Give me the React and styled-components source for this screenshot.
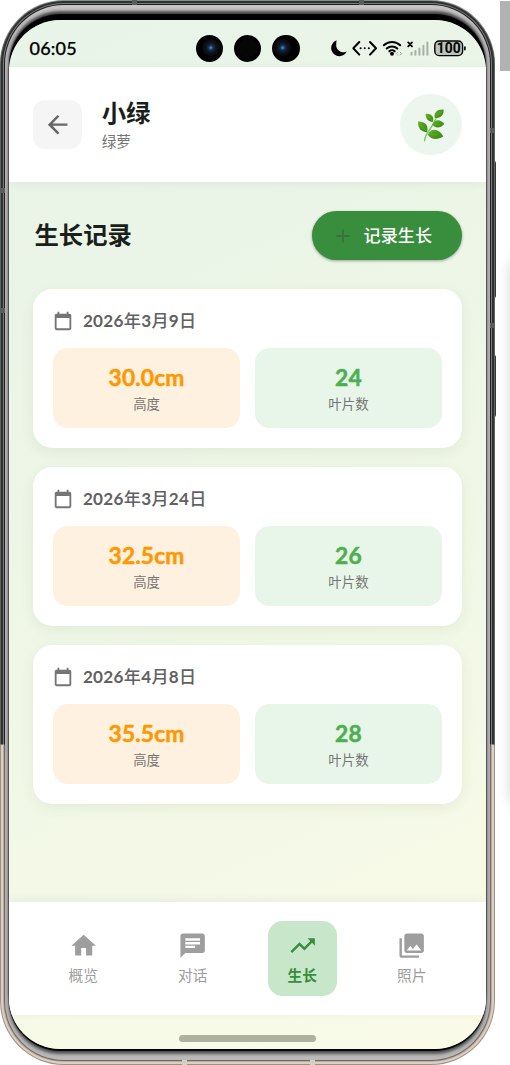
import React from 'react';
import styled, { createGlobalStyle } from 'styled-components';
import {
  MdArrowBack,
  MdHome,
  MdChat,
  MdTrendingUp,
  MdPhotoLibrary,
  MdAdd,
} from 'react-icons/md';

const GlobalStyle = createGlobalStyle`
  * { box-sizing: border-box; }
  body { margin: 0; background: #fff; overflow: hidden; }
  button { font: inherit; border: 0; padding: 0; }
  svg { display: block; flex: none; }
`;

const Stage = styled.div`
  position: relative;
  width: 510px;
  height: 1065px;
  overflow: hidden;
  font-family: Lato, 'Noto Sans CJK SC', sans-serif;
  color: #1b1f1b;
`;

const ScrollThumb = styled.div`
  position: absolute;
  left: 500px;
  top: 1px;
  width: 10px;
  height: 70px;
  background: #b2b2b2;
`;

const SidePanel = styled.div`
  position: absolute;
  left: 511px;
  top: 262px;
  width: 40px;
  height: 540px;
  box-shadow: 0 0 14px rgba(0, 0, 0, 0.18);
`;

const SideKey = styled.div`
  position: absolute;
  left: 493px;
  top: ${(p) => p.$top}px;
  width: 3px;
  height: ${(p) => p.$height}px;
  border-radius: 0 2px 2px 0;
  background: #333538;
`;

const Shell = styled.div`
  position: relative;
  width: 495px;
  height: 1065px;
  padding: 1px;
  border-radius: 64px;
  background: linear-gradient(#8a8d8a, #606262 60px, #606262 744px, #9c9184 745px, #9c9184);
`;

const Band = styled.div`
  height: 100%;
  padding: 2px;
  border-radius: 63px;
  background: linear-gradient(#303232 743px, #d9d0c3 744px);
`;

const Groove = styled.div`
  height: 100%;
  padding: 1px;
  border-radius: 61px;
  background: linear-gradient(#77797b 741px, #b8ac9d 742px);
`;

const Rim = styled.div`
  height: 100%;
  padding: 1px;
  border-radius: 60px;
  background: linear-gradient(#1d1f20 740px, #74695f 741px);
`;

const Bezel = styled.div`
  height: 100%;
  padding: 15px 4px 11px;
  border-radius: 59px;
  overflow: hidden;
  background: linear-gradient(#c6c4c4, #b3afb0 60px, #b3afb0 calc(100% - 60px), #b9b9bb);
`;

const Screen = styled.div`
  display: flex;
  flex-direction: column;
  height: 100%;
  border-radius: 51px;
  overflow: hidden;
  background: linear-gradient(155deg, #e7f4e8 0%, #eef6e6 45%, #f9fbe7 100%);
  box-shadow:
    0 -5.5px 1px #000,
    0 -9px 3px #4a4a4a,
    0 2px 1px #000,
    0 5px 3px #555,
    0 0 0 1px #8d8a8b;
`;

const AntennaLine = styled.div`
  position: absolute;
  left: ${(p) => p.$x}px;
  top: ${(p) => p.$y}px;
  width: 5px;
  height: 5px;
  background: ${(p) => (p.$light ? '#d6cfc5' : '#5b5d5d')};
`;

const StatusBar = styled.div`
  display: flex;
  align-items: center;
  flex: none;
  height: 47.4px;
  padding: 9px 20px 0 20.5px;
`;

const Clock = styled.div`
  width: 166px;
  font-size: 18px;
  line-height: 24px;
  font-weight: 500;
  letter-spacing: 0.2px;
  -webkit-text-stroke: 0.25px #000;
  color: #000;
`;

const Cameras = styled.div`
  display: flex;
  gap: 11px;
`;

const Lens = styled.div`
  width: 27.4px;
  height: 27.4px;
  border-radius: 50%;
  background: ${(p) =>
    p.$glass
      ? `radial-gradient(circle at ${p.$glass} 47%, #4b87bd 0 0.6px, #1b4271 1.8px, #13203a 3.5px, #0d1016 6px, #0a0b0c 8px, #000 9px)`
      : 'radial-gradient(circle, #060606 9px, #000 10px)'};
`;

const StatusIcons = styled.div`
  display: flex;
  align-items: center;
  margin-left: auto;
`;

const Header = styled.header`
  display: flex;
  align-items: center;
  flex: none;
  height: 114.6px;
  padding: 0 24.4px;
  background: #fff;
  box-shadow: 0 2px 10px rgba(0, 0, 0, 0.05);
`;

const BackButton = styled.button`
  display: grid;
  place-items: center;
  width: 48.8px;
  height: 48.8px;
  border-radius: 12px;
  background: #f5f5f5;
  color: #666;
`;

const Titles = styled.div`
  flex: 1;
  margin-left: 19.5px;
`;

const PlantName = styled.h1`
  margin: 0;
  font-size: 24.4px;
  line-height: 32px;
  font-weight: 700;
`;

const Species = styled.div`
  font-size: 14.66px;
  line-height: 20px;
  margin-top: 3px;
  color: #757575;
`;

const Avatar = styled.div`
  display: grid;
  place-items: center;
  width: 61.5px;
  height: 61.5px;
  border-radius: 50%;
  background: #edf6ee;
`;

const Content = styled.main`
  flex: 1;
  padding: 29.2px 24.4px 0;
`;

const SectionBar = styled.div`
  display: flex;
  align-items: center;
  justify-content: space-between;
  margin-bottom: 29px;
`;

const SectionTitle = styled.h2`
  margin: 0;
  padding: 0 0 1.4px 1px;
  font-size: 24.4px;
  line-height: 36px;
  font-weight: 700;
`;

const AddButton = styled.button`
  display: flex;
  align-items: center;
  gap: 10px;
  width: 150px;
  height: 49px;
  padding-left: 20px;
  border-radius: 25px;
  background: #388e3c;
  box-shadow: 0 1px 3px rgba(0, 0, 0, 0.35);
  color: #fff;

  svg { color: #3a703b; }
  span {
    font-size: 17.1px;
    font-weight: 500;
    line-height: 24px;
  }
`;

const Records = styled.div`
  display: flex;
  flex-direction: column;
  gap: 19.5px;
`;

const Card = styled.article`
  height: 158.6px;
  padding: 19.5px;
  border-radius: 19.5px;
  background: #fff;
  box-shadow: 0 4px 14px rgba(50, 80, 30, 0.07);
`;

const DateRow = styled.div`
  display: flex;
  align-items: center;
  gap: 9px;
  height: 24px;
  margin-bottom: 15px;
  color: #616161;

  svg { margin-left: -1px; color: #757575; }
`;

const DateText = styled.div`
  font-size: 17.1px;
  font-weight: 700;
  line-height: 24px;
  letter-spacing: 0.3px;

  b { font-weight: 500; }
`;

const Tiles = styled.div`
  display: grid;
  grid-template-columns: 1fr 1fr;
  gap: 14.6px;
`;

const Tile = styled.div`
  display: flex;
  flex-direction: column;
  align-items: center;
  height: 80.3px;
  padding-top: 15px;
  border-radius: 14.6px;
  background: ${(p) => (p.$warm ? '#fff1df' : '#e8f5e9')};
`;

const Value = styled.div`
  font-size: 22.8px;
  line-height: 28px;
  font-weight: 700;
  letter-spacing: 0.15px;
  -webkit-text-stroke: 0.5px currentColor;
  color: ${(p) => (p.$warm ? '#ff9800' : '#4caf50')};
`;

const Caption = styled.div`
  font-size: 13.4px;
  line-height: 20px;
  margin-top: 3.3px;
  color: #757575;
`;

const TabBar = styled.nav`
  display: grid;
  grid-template-columns: repeat(4, 1fr);
  justify-items: center;
  align-items: center;
  flex: none;
  height: 113px;
  padding: 0 19.5px;
  background: #fff;
  box-shadow: 0 -2px 10px rgba(0, 0, 0, 0.05);
`;

const Tab = styled.div`
  display: flex;
  flex-direction: column;
  align-items: center;
  width: 69px;
  height: 74.6px;
  padding-top: 9.6px;
  border-radius: 14.6px;
  background: ${(p) => (p.$active ? '#c8e6c9' : 'transparent')};
  color: ${(p) => (p.$active ? '#388e3c' : '#9e9e9e')};
  font-size: 14.66px;
  line-height: 20px;
  font-weight: ${(p) => (p.$active ? 700 : 400)};

  span { margin-top: 6.3px; }
`;

const GestureArea = styled.div`
  display: flex;
  justify-content: center;
  flex: none;
  height: 34px;
  padding-top: 20.3px;
`;

const GestureBar = styled.div`
  width: 137px;
  height: 6.6px;
  border-radius: 4px;
  background: #aeb19e;
`;

const StatusGlyphs = () => (
  <svg width="137" height="20" viewBox="329 38 137 20" fill="none" stroke="#000" strokeLinecap="round" strokeLinejoin="round">
    <path d="M336.600 40.300a8.200 8.200 0 1 0 10.200 11.200c-5 2.300-10.600-1.200-10.600-6.300 0-1.800.1-3.400.4-4.900z" fill="#000" stroke="none" />
    <path d="M359.3 42l-6 6.3 6 6.3M370 42l6 6.3-6 6.3" strokeWidth="2" />
    <path d="M360.6 48.3h.1M364.7 48.3h.1M368.8 48.3h.1" strokeWidth="2" />
    <path d="M383.8 45.3a11.8 11.8 0 0 1 16.4 0M386.7 48.5a7.7 7.7 0 0 1 10.6 0M389.3 51.3a3.9 3.9 0 0 1 5.4 0" strokeWidth="2" />
    <circle cx="392" cy="53.7" r="2" fill="#000" stroke="none" />
    <path d="M397.8 52.2l-1.5 1.5 1.5 1.5M400.2 52.2l1.5 1.5-1.5 1.5" stroke="#a5afa5" strokeWidth="1" />
    <path d="M408.2 42.4l3.8 4M412 42.4l-3.800 4" strokeWidth="1.8" />
    <path d="M411.5 52.8v2M415.4 51v3.8M419.4 48.6v6.2M423.4 45.8v9M427.4 42.4v12.4" stroke="#a8b0a7" strokeWidth="2" />
    <rect x="434.8" y="41" width="27.8" height="14.6" rx="4.4" fill="#bac4ba" strokeWidth="1.4" />
    <path d="M464.9 47v2.8" strokeWidth="1.6" />
    <text x="448.7" y="53.2" textAnchor="middle" fontFamily="Roboto, sans-serif" fontWeight="700" fontSize="13.8" fill="#000" stroke="none">100</text>
  </svg>
);

const CalendarIcon = () => (
  <svg width="22" height="22" viewBox="0 0 24 24" fill="currentColor">
    <path d="M19 4h-1V2h-2v2H8V2H6v2H5c-1.100 0-2 .9-2 2v14c0 1.100.9 2 2 2h14c1.100 0 2-.9 2-2V6c0-1.100-.9-2-2-2zm0 16H5V8.800h14V20z" />
  </svg>
);

const Sprig = () => (
  <svg width="30" height="36" viewBox="416 106 30 36">
    <defs>
      <linearGradient id="leaf" x1="0" y1="0" x2="1" y2="1">
        <stop offset="0" stopColor="#6bb32b" />
        <stop offset="0.5" stopColor="#4a981c" />
        <stop offset="1" stopColor="#3a8c17" />
      </linearGradient>
    </defs>
    <path d="M424.600 139.800C425 132 431 128.500 434 121.500S437.500 115 439.500 113" fill="none" stroke="#7fc66a" strokeWidth="1.4" strokeLinecap="round" />
    <g fill="url(#leaf)">
      <path d="M434.700 116.700C433.600 111.200 437.500 107.800 443.700 108.500C443.800 114 440.500 118 434.700 116.700z" />
      <path d="M425.600 112.900C430.800 112.300 434.300 115.500 433.100 120.700C428 120.800 425.800 117.700 425.600 112.900z" />
      <path d="M432.300 123.500C434.800 118 440.500 118 444.300 123C440.500 127.600 435.300 127.700 432.300 123.500z" />
      <path d="M418 120.600C425.200 120.400 429 124.500 427 131.300C420.500 131 417.800 127 418 120.600z" />
      <path d="M427.800 133.700C430.600 126.800 439 127.200 443.300 135.500C437.500 139.300 430.800 138.600 427.800 133.700z" />
    </g>
    <path d="M436.500 115l4.500-4.200M428 115l4 4.500M434.500 123.200h6M421 124l5 6M430.500 133.200l7 .8" stroke="#86bf45" strokeWidth=".4" fill="none" />
  </svg>
);

const RECORDS = [
  { date: [2026, 3, 9], height: '30.0cm', leaves: 24 },
  { date: [2026, 3, 24], height: '32.5cm', leaves: 26 },
  { date: [2026, 4, 8], height: '35.5cm', leaves: 28 },
];

const TABS = [
  { label: '概览', Icon: MdHome },
  { label: '对话', Icon: MdChat },
  { label: '生长', Icon: MdTrendingUp, active: true },
  { label: '照片', Icon: MdPhotoLibrary },
];

const RecordCard = ({ date: [y, m, d], height, leaves }) => (
  <Card>
    <DateRow>
      <CalendarIcon />
      <DateText>
        {y}<b>年</b>{m}<b>月</b>{d}<b>日</b>
      </DateText>
    </DateRow>
    <Tiles>
      <Tile $warm>
        <Value $warm>{height}</Value>
        <Caption>高度</Caption>
      </Tile>
      <Tile>
        <Value>{leaves}</Value>
        <Caption>叶片数</Caption>
      </Tile>
    </Tiles>
  </Card>
);

export default function App() {
  return (
    <Stage>
      <GlobalStyle />
      <ScrollThumb />
      <SidePanel />
      <SideKey $top={161} $height={137} />
      <SideKey $top={355} $height={62} />
      <Shell>
        <Band>
          <Groove>
            <Rim>
              <Bezel>
                <Screen>
                  <StatusBar>
                    <Clock>06:05</Clock>
                    <Cameras>
                      <Lens $glass="55%" />
                      <Lens />
                      <Lens $glass="38%" />
                    </Cameras>
                    <StatusIcons>
                      <StatusGlyphs />
                    </StatusIcons>
                  </StatusBar>
                  <Header>
                    <BackButton aria-label="返回">
                      <MdArrowBack size={29.3} />
                    </BackButton>
                    <Titles>
                      <PlantName>小绿</PlantName>
                      <Species>绿萝</Species>
                    </Titles>
                    <Avatar>
                      <Sprig />
                    </Avatar>
                  </Header>
                  <Content>
                    <SectionBar>
                      <SectionTitle>生长记录</SectionTitle>
                      <AddButton>
                        <MdAdd size={22} />
                        <span>记录生长</span>
                      </AddButton>
                    </SectionBar>
                    <Records>
                      {RECORDS.map((r) => (
                        <RecordCard key={r.date.join('-')} {...r} />
                      ))}
                    </Records>
                  </Content>
                  <TabBar>
                    {TABS.map(({ label, Icon, active }) => (
                      <Tab key={label} $active={active}>
                        <Icon size={29.3} />
                        <span>{label}</span>
                      </Tab>
                    ))}
                  </TabBar>
                  <GestureArea>
                    <GestureBar />
                  </GestureArea>
                </Screen>
              </Bezel>
            </Rim>
          </Groove>
        </Band>
        <AntennaLine $x={132} $y={0} />
        <AntennaLine $x={359} $y={0} />
        <AntennaLine $x={0} $y={188} />
        <AntennaLine $x={0} $y={308} />
        <AntennaLine $x={490} $y={128} />
        <AntennaLine $x={490} $y={323} />
        <AntennaLine $x={182} $y={1060} $light />
        <AntennaLine $x={310} $y={1060} $light />
      </Shell>
    </Stage>
  );
}
